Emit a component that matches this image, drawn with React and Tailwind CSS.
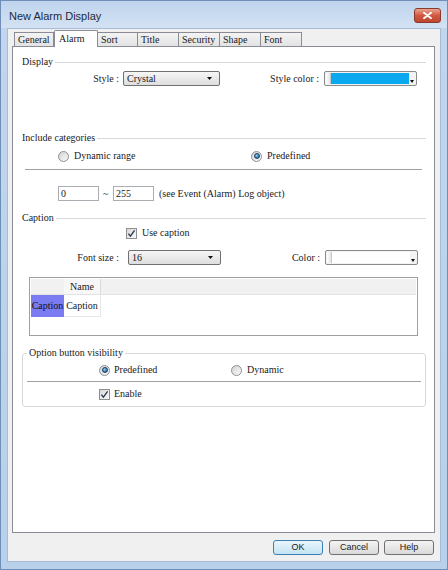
import React from "react";

const serif = "font-[family-name:'Liberation_Serif','Times_New_Roman',serif] font-normal text-[10px] text-[#1a1a1a]";

function Radio({ checked }) {
  return (
    <span className="w-[11px] h-[11px] rounded-full border border-[#8e8f8f] bg-linear-to-br from-[#d2d2d2] to-[#fbfbfb] flex items-center justify-center shrink-0">
      {checked && (
        <span className="w-[6px] h-[6px] rounded-full border border-[#17406a] bg-[radial-gradient(circle_at_35%_35%,#8fd0f5,#0f4c80)]" />
      )}
    </span>
  );
}

function Check() {
  return (
    <span className="w-[11px] h-[11px] border border-[#8e8f8f] bg-linear-to-br from-[#d8d8d8] to-[#fafafa] flex items-center justify-center shrink-0">
      <svg width="9" height="9" viewBox="0 0 9 9">
        <path d="M1.4 4.6 L3.4 7.2 L7.6 1.4" fill="none" stroke="#2a3550" strokeWidth="1.3" />
      </svg>
    </span>
  );
}

function Arrow() {
  return (
    <svg width="5" height="3" viewBox="0 0 5 3" className="shrink-0">
      <path d="M0 0H5L2.5 3Z" fill="#111" />
    </svg>
  );
}

function ColorBox({ fill }) {
  return (
    <div className="w-[93px] h-[15px] border border-[#8a8a8a] rounded-[2px] bg-[#f3f3f3] flex p-[1px]">
      <div className="w-[5px] bg-linear-to-r from-[#ffffff] to-[#e3e3e3] border-r border-[#c9c9c9]" />
      <div className={fill} />
      <div className="w-[6px] flex items-end justify-center pb-[1px]">
        <svg width="4" height="3" viewBox="0 0 4 3">
          <path d="M0 0H4L2 3Z" fill="#111" />
        </svg>
      </div>
    </div>
  );
}

function GroupHeader({ label }) {
  return (
    <div className="h-[14px] flex items-center">
      <span className="leading-[14px]">{label}</span>
      <div className="flex-1 h-px bg-[#d5d9dd] ml-[2px]" />
    </div>
  );
}

function Tab({ label, w, selected }) {
  if (selected) {
    return (
      <div className={`${w} h-[17px] -mb-px relative z-10 bg-white border border-b-0 border-[#898c95] rounded-t-[2px] pl-[4px] pt-[1px] leading-[14px]`}>
        {label}
      </div>
    );
  }
  return (
    <div className={`${w} h-[14px] bg-linear-to-b from-[#f3f3f3] to-[#e3e3e3] border border-b-0 border-[#898c95] -ml-px first:ml-0 pl-[3px] leading-[13px]`}>
      {label}
    </div>
  );
}

function Btn({ label, primary, extra }) {
  const base =
    "w-[50px] h-[15px] rounded-[3px] border text-[9px] leading-[13px] text-[#1a1a1a] font-[family-name:'Liberation_Sans',Arial,sans-serif] block";
  return (
    <button
      className={
        primary
          ? `${base} border-[#3c7fb1] bg-linear-to-b from-[#eaf6fd] to-[#c4e3f3]`
          : `${base} border-[#707070] bg-linear-to-b from-[#f4f4f4] to-[#d9d9d9] ${extra || ""}`
      }
    >
      {label}
    </button>
  );
}

export default function App() {
  return (
    <div className="w-[448px] h-[570px] bg-linear-to-b from-[#c2d6ee] to-[#b8d0ea] border border-[#6f8fb8] flex flex-col overflow-hidden">
      {/* Title bar */}
      <div className="h-[27px] flex items-start justify-between pl-[8px] pr-[6px] bg-linear-to-b from-[#bfd4ee] to-[#d3e2f3]">
        <span className="mt-[8px] text-[11px] leading-[14px] text-[#1e2b3c] font-[family-name:'Liberation_Sans',Arial,sans-serif]">
          New Alarm Display
        </span>
        <div className="mt-[7px] w-[27px] h-[15px] rounded-[3px] border border-[#8a3a2c] bg-linear-to-b from-[#e8a493] via-[#d0583f] to-[#c0462f] flex items-center justify-center">
          <svg width="9" height="7" viewBox="0 0 9 7">
            <path d="M1 0.8 L8 6.2 M8 0.8 L1 6.2" stroke="#fff" strokeWidth="1.9" strokeLinecap="round" />
          </svg>
        </div>
      </div>

      {/* Client */}
      <div className="flex-1 mx-[6px] mb-[7px] bg-[#f0f0f0] border border-[#a6bcd6] flex flex-col">
        {/* Tabs */}
        <div className={`h-[17px] flex items-end pl-[6px] ${serif}`}>
          <Tab label="General" w="w-[40px]" />
          <Tab label="Alarm" w="w-[44px]" selected />
          <Tab label="Sort" w="w-[41px]" />
          <Tab label="Title" w="w-[42px]" />
          <Tab label="Security" w="w-[42px]" />
          <Tab label="Shape" w="w-[42px]" />
          <Tab label="Font" w="w-[42px]" />
        </div>

        {/* Panel */}
        <div className={`flex-1 ml-[4px] mr-[5px] bg-white border border-[#898c95] flex flex-col pl-[9px] pr-[8px] ${serif}`}>
          <div className="mt-[8px]">
            <GroupHeader label="Display" />
          </div>
          <div className="mt-[2px] h-[15px] flex items-center">
            <span className="w-[97px] text-right leading-[15px]">Style :</span>
            <div className="ml-[4px] w-[97px] h-[15px] border border-[#707070] rounded-[2px] bg-linear-to-b from-[#f6f6f6] to-[#dedede] flex items-center justify-between pl-[3px] pr-[7px] leading-[13px]">
              <span>Crystal</span>
              <Arrow />
            </div>
            <span className="w-[99px] text-right leading-[15px]">Style color :</span>
            <div className="ml-[5px]">
              <ColorBox fill="flex-1 bg-[#0aa8ee]" />
            </div>
          </div>

          <div className="mt-[45px]">
            <GroupHeader label="Include categories" />
          </div>
          <div className="mt-[4px] h-[14px] flex items-center pl-[36px]">
            <div className="w-[193px] flex items-center">
              <Radio />
              <span className="ml-[5px] leading-[14px]">Dynamic range</span>
            </div>
            <div className="flex items-center">
              <Radio checked />
              <span className="ml-[5px] leading-[14px]">Predefined</span>
            </div>
          </div>
          <div className="mt-[6px] ml-[3px] mr-[4px] h-px bg-[#a0a0a0]" />

          <div className="mt-[16px] h-[15px] flex items-center pl-[36px]">
            <div className="w-[41px] h-[15px] border border-[#abadb3] bg-white pl-[2px] leading-[13px]">0</div>
            <span className="ml-[4px] w-[10px] leading-[15px]">~</span>
            <div className="w-[41px] h-[15px] border border-[#abadb3] bg-white pl-[2px] leading-[13px]">255</div>
            <span className="ml-[5px] leading-[15px]">(see Event (Alarm) Log object)</span>
          </div>

          <div className="mt-[10px]">
            <GroupHeader label="Caption" />
          </div>
          <div className="mt-[1px] h-[14px] flex items-center pl-[104px]">
            <Check />
            <span className="ml-[5px] leading-[14px]">Use caption</span>
          </div>

          <div className="mt-[10px] h-[15px] flex items-center">
            <span className="w-[97px] text-right leading-[15px]">Font size :</span>
            <div className="ml-[9px] w-[93px] h-[15px] border border-[#707070] rounded-[2px] bg-linear-to-b from-[#f6f6f6] to-[#dedede] flex items-center justify-between pl-[3px] pr-[7px] leading-[13px]">
              <span>16</span>
              <Arrow />
            </div>
            <span className="w-[99px] text-right leading-[15px]">Color :</span>
            <div className="ml-[5px]">
              <ColorBox fill="flex-1 bg-white" />
            </div>
          </div>

          {/* Table */}
          <div className="mt-[12px] ml-[7px] mr-[8px] h-[59px] border border-[#a0a0a0] bg-white p-[1px] flex flex-col">
            <div className="h-[16px] flex bg-[#f1f1f1] border-b border-[#e3e3e3]">
              <div className="w-[33px]" />
              <div className="w-[37px] text-center leading-[16px] bg-[#f7f7f7] border-r border-[#dadada]">Name</div>
            </div>
            <div className="h-[22px] flex">
              <div className="w-[33px] bg-[#7b7bf2] leading-[22px] text-center text-[#111]">Caption</div>
              <div className="w-[37px] leading-[22px] text-center border-r border-b border-[#e6e6e6]">Caption</div>
            </div>
          </div>

          {/* Option button visibility */}
          <fieldset className="mt-[10px] border border-[#d5d9dd] rounded-[3px] pb-[5px]">
            <legend className="ml-[4px] px-[2px] leading-[14px]">Option button visibility</legend>
            <div className="mt-[3px] h-[14px] flex items-center pl-[76px]">
              <div className="w-[132px] flex items-center">
                <Radio checked />
                <span className="ml-[4px] leading-[14px]">Predefined</span>
              </div>
              <div className="flex items-center">
                <Radio />
                <span className="ml-[5px] leading-[14px]">Dynamic</span>
              </div>
            </div>
            <div className="mt-[4px] mx-[4px] h-px bg-[#a0a0a0]" />
            <div className="mt-[5px] h-[14px] flex items-center pl-[76px]">
              <Check />
              <span className="ml-[4px] leading-[14px]">Enable</span>
            </div>
          </fieldset>
        </div>

        {/* Buttons */}
        <div className="h-[28px] flex items-start justify-end pr-[6px] pt-[7px] gap-[5px]">
          <Btn label="OK" primary />
          <Btn label="Cancel" extra="ml-px" />
          <Btn label="Help" />
        </div>
      </div>
    </div>
  );
}
